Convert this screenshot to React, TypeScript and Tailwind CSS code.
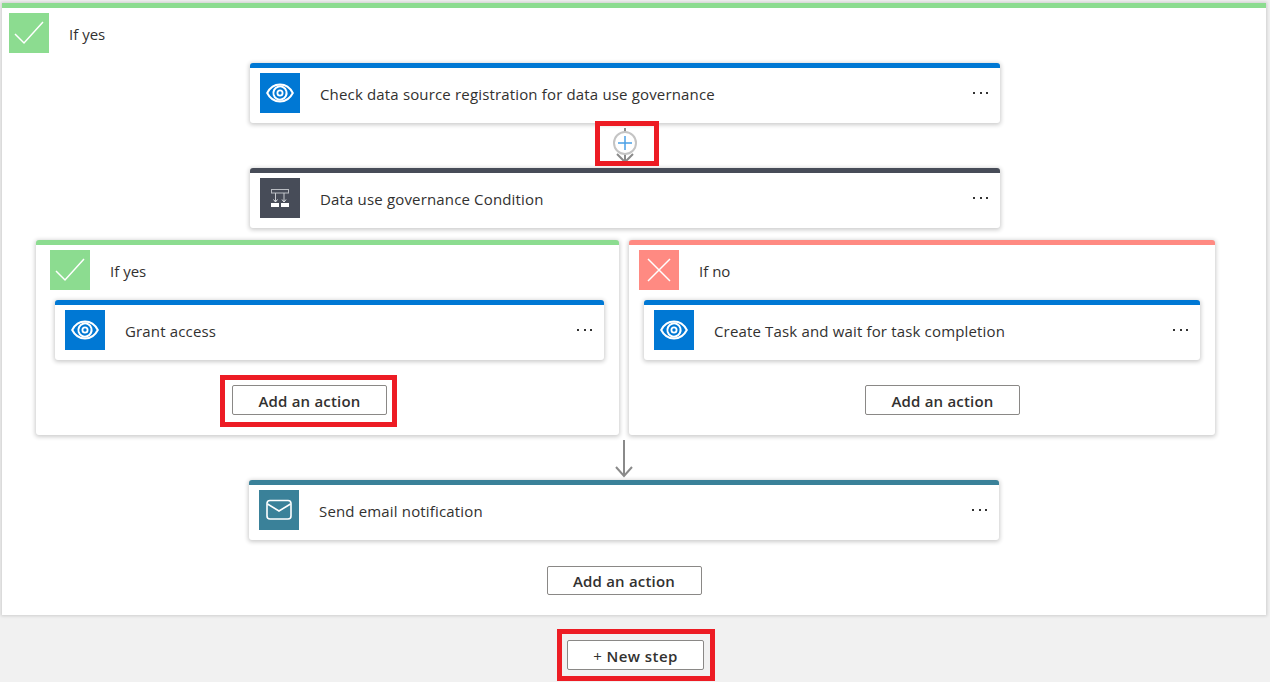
import React from "react";

function Eye() {
  return (
    <svg width="28" height="20" viewBox="0 0 28 20" fill="none" stroke="white" strokeWidth="2">
      <path d="M1.2 10C4 4.5 8.5 1.5 14 1.5S24 4.5 26.8 10C24 15.5 19.5 18.5 14 18.5S4 15.5 1.2 10Z" />
      <path d="M7.7 12A6.6 6.6 0 0 1 20.3 8" />
      <path d="M20.3 8A6.6 6.6 0 0 1 7.7 12" />
      <circle cx="14" cy="10" r="2.6" strokeWidth="1.8" />
    </svg>
  );
}

function Cond() {
  return (
    <svg width="20" height="20" viewBox="0 0 20 20" fill="none">
      <rect x="1.5" y="1.5" width="17" height="3.5" stroke="#b9bcc2" strokeWidth="1" />
      <path d="M5.5 5V14M14 5V14" stroke="#c9ccd1" strokeWidth="1" />
      <path d="M3.5 11.5L5.5 14L7.5 11.5M12 11.5L14 14L16 11.5" stroke="#e5e7ea" strokeWidth="1" />
      <rect x="1" y="15" width="8" height="4" fill="#fff" />
      <rect x="11" y="15" width="8" height="4" fill="#fff" />
    </svg>
  );
}

function Mail() {
  return (
    <svg width="26" height="22" viewBox="0 0 26 22" fill="none" stroke="white" strokeWidth="1.6">
      <rect x="1" y="1.5" width="24" height="18.5" rx="3" />
      <path d="M1.5 5L13 12L24.5 5" />
    </svg>
  );
}

function Check() {
  return (
    <svg width="32" height="26" viewBox="0 0 32 26" fill="none" stroke="white" strokeWidth="1.5">
      <path d="M2 14L11 23L30 2" />
    </svg>
  );
}

function Cross() {
  return (
    <svg width="24" height="24" viewBox="0 0 24 24" fill="none" stroke="white" strokeWidth="1.5">
      <path d="M1 1L23 23M23 1L1 23" />
    </svg>
  );
}

function Dots() {
  return (
    <div className="flex gap-[4.5px]">
      <span className="w-[2px] h-[2px] bg-[#333]" />
      <span className="w-[2px] h-[2px] bg-[#333]" />
      <span className="w-[2px] h-[2px] bg-[#333]" />
    </div>
  );
}

function Action({ title, color, icon, width }: { title: string; color: string; icon: React.ReactNode; width: string }) {
  return (
    <div className={`${width} h-[60px] bg-white rounded-[3px] border-t-[5px] ${color === "blue" ? "border-[#0078d4]" : color === "dark" ? "border-[#474c58]" : "border-[#3a8199]"} shadow-[0_1px_4px_1px_rgba(0,0,0,0.2)] flex items-start pl-[10px] pt-[5px]`}>
      <div className={`w-10 h-10 shrink-0 flex items-center justify-center ${color === "blue" ? "bg-[#0078d4]" : color === "dark" ? "bg-[#474c58]" : "bg-[#3a8199]"}`}>{icon}</div>
      <div className="ml-5 flex-1 h-10 pt-[2px] flex items-center text-[15px] text-[#323130] tracking-[0.16px]">{title}</div>
      <div className="mr-[12px] mt-[19px]"><Dots /></div>
    </div>
  );
}

function Btn({ label, height = "h-[30px]" }: { label: string; height?: string }) {
  return (
    <button className={`w-[155px] ${height} pt-[2px] bg-white border border-[#8a8886] rounded-[2px] text-[15px] tracking-[0.2px] font-semibold text-[#323130]`}>{label}</button>
  );
}

export default function App() {
  return (
    <div className="w-[1270px] h-[682px] bg-[#f1f1f1] overflow-hidden relative" style={{ fontFamily: '"Open Sans", "Noto Sans", sans-serif' }}>
      <div className="ml-[2px] mt-[3px] w-[1264px] h-[612px] bg-white border-t-[5px] border-[#8cdc90] shadow-[0_0_3px_1px_rgba(0,0,0,0.15)] relative">
        <div className="flex items-center pl-[7px] pt-[5px]">
          <div className="w-10 h-10 bg-[#8cdc90] flex items-center justify-center"><Check /></div>
          <span className="ml-5 pt-[3px] text-[15px] text-[#323130]">If yes</span>
        </div>
        <div className="flex flex-col items-center pr-[18px]">
          <div className="mt-[10px]"><Action title="Check data source registration for data use governance" color="blue" icon={<Eye />} width="w-[750px]" /></div>
          <div className="relative h-[45px] w-[60px]">
            <div className="absolute left-[29px] top-[5px] w-[2px] h-[38px] bg-[#8a8a8a]" />
            <svg className="absolute left-[19px] top-[29px]" width="22" height="12" viewBox="0 0 22 12" fill="none" stroke="#8a8a8a" strokeWidth="2"><path d="M3 2L11 10L19 2" /></svg>
            <div className="absolute left-[18px] top-[8px] w-[24px] h-[24px] rounded-full bg-white border-2 border-[#c4c4c4] flex items-center justify-center">
              <svg width="14" height="14" viewBox="0 0 14 14" stroke="#4aa0e6" strokeWidth="1.5"><path d="M7 0V14M0 7H14" /></svg>
            </div>
          </div>
          <Action title="Data use governance Condition" color="dark" icon={<Cond />} width="w-[750px]" />
        </div>
        <div className="flex gap-[10px] pl-[34px] mt-[12px]">
          <div className="w-[583px] h-[195px] bg-white border-t-[5px] border-[#8cdc90] rounded-[3px] shadow-[0_1px_4px_1px_rgba(0,0,0,0.2)] pt-[5px]">
            <div className="flex items-center pl-[14px]">
              <div className="w-10 h-10 bg-[#8cdc90] flex items-center justify-center"><Check /></div>
              <span className="ml-5 pt-[3px] text-[15px] text-[#323130]">If yes</span>
            </div>
            <div className="pl-[19px] mt-[10px]"><Action title="Grant access" color="blue" icon={<Eye />} width="w-[549px]" /></div>
            <div className="mt-[25px] pl-[196px]"><Btn label="Add an action" /></div>
          </div>
          <div className="w-[586px] h-[195px] bg-white border-t-[5px] border-[#ff8a82] rounded-[3px] shadow-[0_1px_4px_1px_rgba(0,0,0,0.2)] pt-[5px]">
            <div className="flex items-center pl-[10px]">
              <div className="w-10 h-10 bg-[#ff8a82] flex items-center justify-center"><Cross /></div>
              <span className="ml-5 pt-[3px] text-[15px] text-[#323130]">If no</span>
            </div>
            <div className="pl-[15px] mt-[10px]"><Action title="Create Task and wait for task completion" color="blue" icon={<Eye />} width="w-[556px]" /></div>
            <div className="mt-[25px] pl-[236px]"><Btn label="Add an action" /></div>
          </div>
        </div>
        <div className="flex flex-col items-center pr-[18px]">
          <div className="h-[45px] w-[750px] relative">
            <svg className="absolute left-[364px] top-[5px]" width="20" height="38" viewBox="0 0 20 38" fill="none" stroke="#8a8a8a" strokeWidth="2"><path d="M10 0V36M2 27L10 36L18 27" /></svg>
          </div>
          <div className="-ml-[2px]"><Action title="Send email notification" color="teal" icon={<Mail />} width="w-[750px]" /></div>
          <div className="mt-[26px] -ml-[2px]"><Btn label="Add an action" height="h-[29px]" /></div>
        </div>
      </div>
      <div className="mt-[25px] ml-[567px]">
        <button className="w-[137px] h-[30px] pt-[2px] bg-white border border-[#8a8886] rounded-[2px] text-[15px] tracking-[0.45px] font-semibold text-[#323130]"><span className="font-normal">+</span> New step</button>
      </div>
      <div className="absolute left-[595px] top-[121px] w-[64px] h-[45px] border-[5px] border-[#ed1c24]" />
      <div className="absolute left-[220px] top-[375px] w-[177px] h-[52px] border-[5px] border-[#ed1c24]" />
      <div className="absolute left-[557px] top-[629px] w-[158px] h-[52px] border-[5px] border-[#ed1c24]" />
    </div>
  );
}
